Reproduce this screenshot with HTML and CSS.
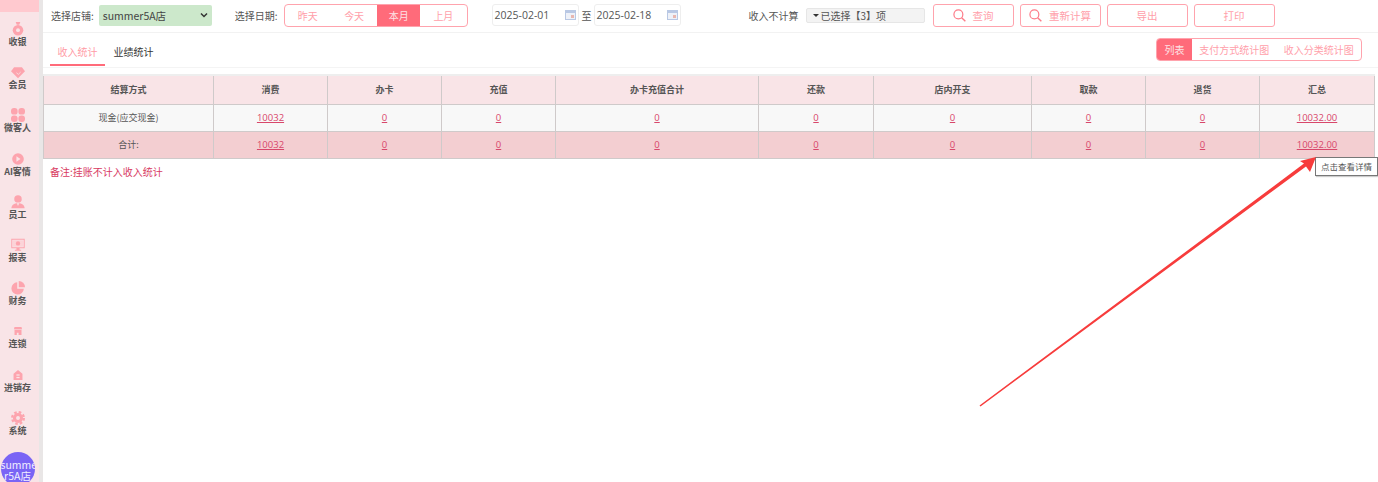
FILE: index.html
```html
<!DOCTYPE html>
<html lang="zh">
<head>
<meta charset="utf-8">
<title>收入统计</title>
<link rel="stylesheet" href="styles.css">
</head>
<body>
<div class="app">
  <nav class="sidebar">
    <div class="side-top"></div>
    <a class="nav-item"><svg class="nav-icon" viewBox="0 0 16 18"><path d="M5 0h6L9.600 3.400h-3.200z"/><circle cx="8" cy="10.500" r="6.800"/><circle cx="8" cy="10.500" r="2.500" fill="#f9e4e7"/></svg><span>收银</span></a>
    <a class="nav-item"><svg class="nav-icon" viewBox="0 0 18 18"><path d="M4 3h10l4 5-9 9-9-9z"/><path d="M7 10l2.500 2 3-3" fill="none" stroke="#f9e4e7" stroke-width="1"/></svg><span>会员</span></a>
    <a class="nav-item"><svg class="nav-icon" viewBox="0 0 18 18"><rect x="0" y="0" width="8.500" height="8.500" rx="3.800"/><rect x="9.500" y="0" width="8.500" height="8.500" rx="3.800"/><rect x="0" y="9.500" width="8.500" height="8.500" rx="3.800"/><rect x="9.500" y="9.500" width="8.500" height="8.500" rx="3.800"/></svg><span>微客人</span></a>
    <a class="nav-item"><svg class="nav-icon" viewBox="0 0 18 18"><circle cx="9" cy="9" r="7.500"/><path d="M7 5.500l5.200 3.500L7 12.500z" fill="#f9e4e7"/></svg><span>AI客情</span></a>
    <a class="nav-item"><svg class="nav-icon" viewBox="0 0 18 18"><circle cx="9" cy="5" r="4.800"/><path d="M0.500 17c0-4 3.500-6.500 8.500-6.500s8.500 2.500 8.500 6.500z"/><path d="M7.500 10.500L9 14l1.500-3.500" fill="#f9e4e7"/></svg><span>员工</span></a>
    <a class="nav-item"><svg class="nav-icon" viewBox="0 0 18 18"><path d="M1 1.500h16v11H1z" fill="none" stroke="#fda4ae" stroke-width="1.300"/><rect x="2.500" y="3" width="13" height="8" fill="#fcd3d8"/><circle cx="9" cy="7" r="2.800"/><path d="M7 13h4v2h2v1.300H5V15h2z"/></svg><span>报表</span></a>
    <a class="nav-item"><svg class="nav-icon" viewBox="0 0 18 18"><path d="M8 1.500a8 8 0 1 0 8.500 8.500H8z"/><path d="M10 0a8 8 0 0 1 8 8h-8z"/></svg><span>财务</span></a>
    <a class="nav-item"><svg class="nav-icon" viewBox="-3 -3 24 24"><path d="M3 2h12l1 4H2z"/><path d="M3 7h12v9H10v-4H7v4H3z"/></svg><span>连锁</span></a>
    <a class="nav-item"><svg class="nav-icon" viewBox="-2 -2 22 22"><path d="M9 1l7 6v10H2V7z"/><rect x="6.500" y="8" width="5" height="2" fill="#f9e4e7"/><rect x="6.500" y="12" width="5" height="2" fill="#f9e4e7"/></svg><span>进销存</span></a>
    <a class="nav-item"><svg class="nav-icon" viewBox="0 0 18 18"><circle cx="9" cy="9" r="7.500" fill="none" stroke="#fda4ae" stroke-width="3" stroke-dasharray="3.300 2.590"/><circle cx="9" cy="9" r="6.500"/><circle cx="9" cy="9" r="2.500" fill="#f9e4e7"/></svg><span>系统</span></a>
    <div class="avatar">summe<br>r5A店</div>
  </nav>
  <main class="content">
    <header class="toolbar">
      <label class="field-label label-store">选择店铺:</label>
      <div class="store-select"><span>summer5A店</span><svg class="chev" viewBox="0 0 8 6"><path d="M1 1.500l3 3 3-3" fill="none" stroke="#333" stroke-width="1.500"/></svg></div>
      <label class="field-label label-date">选择日期:</label>
      <div class="seg seg-date">
        <span>昨天</span><span>今天</span><span class="on">本月</span><span>上月</span>
      </div>
      <div class="date-input first"><span>2025-02-01</span><svg class="cal" viewBox="0 0 11 10"><rect width="11" height="10" fill="#b9c8e4"/><rect x="1" y="3" width="9" height="6" fill="#eef1f8"/><rect x="6" y="5" width="3" height="3" fill="#e8b7b0"/></svg></div>
      <span class="to">至</span>
      <div class="date-input"><span>2025-02-18</span><svg class="cal" viewBox="0 0 11 10"><rect width="11" height="10" fill="#b9c8e4"/><rect x="1" y="3" width="9" height="6" fill="#eef1f8"/><rect x="6" y="5" width="3" height="3" fill="#e8b7b0"/></svg></div>
      <label class="field-label label-exclude">收入不计算</label>
      <div class="multi"><i class="caret"></i>已选择【3】项</div>
      <button class="btn btn-first"><svg class="search" viewBox="0 0 14 14"><circle cx="5.800" cy="5.800" r="4.800" fill="none" stroke="#fd7b88" stroke-width="1.300"/><path d="M9.300 9.300l4 4" stroke="#fd7b88" stroke-width="1.500"/></svg>查询</button>
      <button class="btn"><svg class="search" viewBox="0 0 14 14"><circle cx="5.800" cy="5.800" r="4.800" fill="none" stroke="#fd7b88" stroke-width="1.300"/><path d="M9.300 9.300l4 4" stroke="#fd7b88" stroke-width="1.500"/></svg>重新计算</button>
      <button class="btn">导出</button>
      <button class="btn">打印</button>
    </header>
    <div class="tabbar">
      <div class="tabs"><a class="tab active">收入统计</a><a class="tab">业绩统计</a></div>
      <div class="seg seg-view"><span class="on">列表</span><span>支付方式统计图</span><span>收入分类统计图</span></div>
    </div>
    <table class="report">
      <colgroup>
        <col class="c1"><col class="c2"><col class="c2"><col class="c2"><col class="c3"><col class="c4"><col class="c5"><col class="c2"><col class="c2"><col class="c6">
      </colgroup>
      <thead>
        <tr><th>结算方式</th><th>消费</th><th>办卡</th><th>充值</th><th>办卡充值合计</th><th>还款</th><th>店内开支</th><th>取款</th><th>退货</th><th>汇总</th></tr>
      </thead>
      <tbody>
        <tr class="row"><td>现金(应交现金)</td><td><a>10032</a></td><td><a>0</a></td><td><a>0</a></td><td><a>0</a></td><td><a>0</a></td><td><a>0</a></td><td><a>0</a></td><td><a>0</a></td><td><a>10032.00</a></td></tr>
        <tr class="total"><td>合计:</td><td><a>10032</a></td><td><a>0</a></td><td><a>0</a></td><td><a>0</a></td><td><a>0</a></td><td><a>0</a></td><td><a>0</a></td><td><a>0</a></td><td><a>10032.00</a></td></tr>
      </tbody>
    </table>
    <p class="note">备注:挂账不计入收入统计</p>
  </main>
</div>
<div class="tooltip">点击查看详情</div>
<svg class="arrow" viewBox="0 0 1378 482" aria-hidden="true"><path d="M979.500 405.500L1304 163.600L1300 161L1316 157L1310 172L1306 166.400L980.500 406.500z" fill="#f73c3c"/></svg>
</body>
</html>
```
FILE: styles.css
```css
* { box-sizing: border-box; }
html, body { margin: 0; height: 100%; overflow: hidden; background: #fff; }
body { font-family: "Noto Sans CJK SC", "Open Sans", sans-serif; font-size: 10px; color: #555; }
.app { display: flex; height: 482px; width: 1378px; }

.sidebar { width: 43px; flex: none; background: #f9e4e7; border-right: 4px solid #e9e6e6; display: flex; flex-direction: column; align-items: center; overflow: hidden; padding-right: 4px; }
.side-top { width: 39px; margin-right: -4px; height: 12px; background: #ffc9cf; flex: none; }
.nav-item { height: 43.200px; width: 100%; flex: none; display: flex; flex-direction: column; align-items: center; padding-top: 10px; color: #555; font-size: 9px; font-weight: 700; line-height: 12px; white-space: nowrap; }
.nav-icon { width: 14px; height: 14px; fill: #fda4ae; flex: none; }
.avatar { width: 34px; height: 34px; flex: none; margin-top: 8px; border-radius: 50%; background: #7a64f5; color: #f1eeff; font-size: 10.500px; line-height: 11px; text-align: center; white-space: nowrap; padding-top: 7px; overflow: hidden; }

.content { flex: 1; min-width: 0; padding-right: 4px; }
.toolbar { height: 33px; border-bottom: 1px solid #f2f2f2; display: flex; align-items: center; padding-bottom: 2px; margin-right: -4px; }
.field-label { font-size: 10px; color: #555; flex: none; }
.label-store { margin-left: 8px; }
.store-select { width: 113px; height: 21px; margin-left: 5px; background: #cce8cb; border-radius: 2px; display: flex; align-items: center; justify-content: space-between; padding: 0 4px; font-size: 10.500px; color: #444; }
.chev { width: 8px; height: 6px; }
.label-date { margin-left: 23px; }
.seg { display: flex; border: 1px solid #ffa3ad; border-radius: 4px; overflow: hidden; color: #ffa0aa; background: #fff; }
.seg span { display: flex; align-items: center; justify-content: center; }
.seg .on { background: #ff6b7a; color: #fde3e6; }
.seg-date { width: 184px; height: 23px; margin-left: 6px; font-size: 10px; }
.seg-date span { width: 46.500px; }
.seg-date .on { width: 43px; }
.date-input { width: 87px; height: 22px; border: 1px solid #eeeeee; border-radius: 3px; display: flex; align-items: center; justify-content: space-between; padding: 0 2px; font-family: "Open Sans", sans-serif; font-size: 10.500px; color: #555; }
.date-input.first { margin-left: 24px; }
.cal { width: 11px; height: 10px; }
.to { margin: 0 2px 0 3px; font-size: 10px; }
.label-exclude { margin-left: 68px; }
.multi { width: 119px; height: 15px; margin-left: 7px; background: #f3f3f3; border: 1px solid #e6e6e6; border-radius: 2px; font-size: 10px; line-height: 13px; padding-left: 14px; position: relative; color: #555; }
.caret { position: absolute; left: 6px; top: 5px; border: 3px solid transparent; border-top: 3px solid #333; border-bottom: 0; }
.btn { width: 81px; height: 23px; margin-left: 6px; border: 1px solid #ffa3ad; border-radius: 3px; background: #fff; color: #ffa0aa; font: inherit; font-size: 10.500px; display: flex; align-items: center; justify-content: center; gap: 7px; padding: 0; }
.btn-first { margin-left: 8px; }
.search { width: 13px; height: 13px; flex: none; }

.tabbar { height: 35px; border-bottom: 1px solid #f4f4f4; display: flex; justify-content: space-between; align-items: flex-start; padding: 5px 16px 0 7px; margin-right: -4px; }
.tabs { display: flex; height: 29px; }
.tab { width: 55px; height: 28px; margin-right: 1px; text-align: center; line-height: 28px; font-size: 10px; color: #333; }
.tab.active { color: #ff9ba6; border-bottom: 2px solid #ff6b7a; }
.seg-view { width: 206px; height: 23px; margin-top: 0; font-size: 10px; }
.seg-view span { flex: 1; white-space: nowrap; }
.seg-view .on { flex: none; width: 35px; }

.report { table-layout: fixed; border-collapse: collapse; width: 1331px; margin-top: 6px; border-top: 2px solid #eee; }
.c1 { width: 170px; } .c2 { width: 114px; } .c3 { width: 203px; } .c4 { width: 115px; } .c5 { width: 158px; } .c6 { width: 115px; }
.report th, .report td { border: 1px solid #cfcaca; text-align: center; padding: 0; font-size: 9px; }
.report th { height: 29px; background: #f9e4e7; color: #555; font-weight: 700; }
.report td { height: 27px; color: #555; }
.row td { background: #f8f8f8; }
.total td { background: #f3ced1; }
.report a { color: #d8476b; text-decoration: underline; font-family: "Open Sans", sans-serif; font-size: 9.500px; }
.note { margin: 6px 0 0 7px; color: #d8395f; font-size: 10px; line-height: 14px; }

.tooltip { position: absolute; left: 1315px; top: 157px; width: 63px; height: 19px; background: #fff; border: 1px solid #777; box-shadow: 1px 1px 1px #ccc; font-size: 8.500px; line-height: 17px; text-align: center; color: #555; white-space: nowrap; }
.arrow { position: absolute; left: 0; top: 0; width: 1378px; height: 482px; pointer-events: none; }
```
